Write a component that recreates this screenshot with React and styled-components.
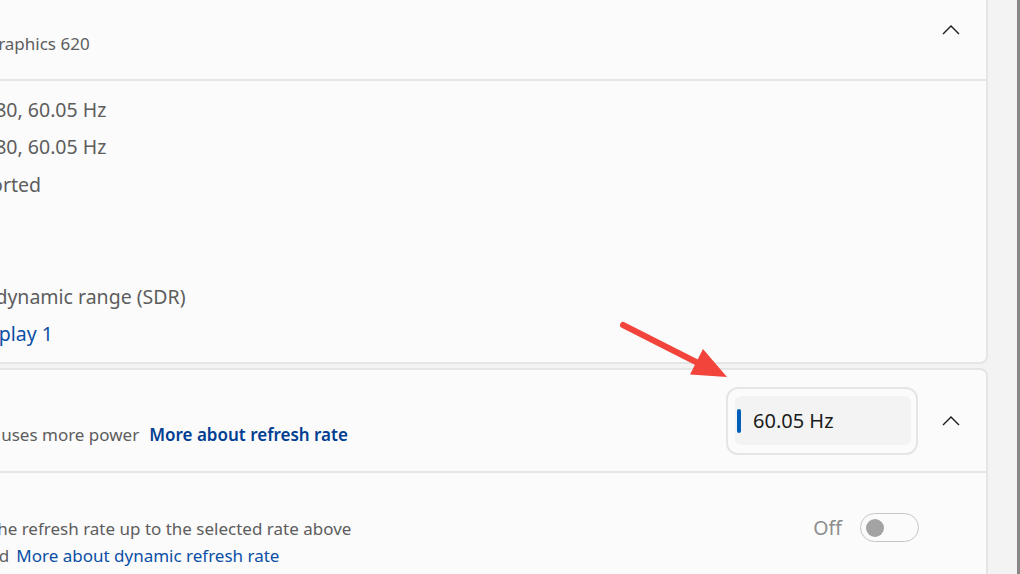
import React from 'react'
import styled, { createGlobalStyle } from 'styled-components'
import { Monitor } from 'lucide-react'

const GlobalStyle = createGlobalStyle`
  html, body {
    margin: 0;
    padding: 0;
  }
  body {
    background: #f3f3f3;
    font-family: "Noto Sans", "Open Sans", sans-serif;
    color: #1b1b1b;
    overflow: hidden;
  }
`

const Window = styled.div`
  position: relative;
  display: flex;
  align-items: flex-start;
  width: 1020px;
  height: 574px;
  overflow: hidden;
  background: #f3f3f3;
`

// the page is scrolled: the column starts left of and above the visible area
const Content = styled.main`
  flex: none;
  width: 1382px;
  margin: -22px 0 0 -394px;
  display: flex;
  flex-direction: column;
  gap: 4px;
`

const Gutter = styled.div`
  flex: none;
  width: 29px;
`

const ScrollThumb = styled.div`
  flex: none;
  align-self: stretch;
  width: 3px;
  background: #878787;
`

const Card = styled.section`
  flex: none;
  background: #fbfbfb;
  border: 2px solid #e5e5e5;
  border-radius: 8px;
  overflow: hidden;
`

const Header = styled.div`
  display: flex;
  align-items: center;
  gap: 24px;
  height: ${p => p.$height}px;
  padding: 0 15px 0 22px;
  border-bottom: 2px solid #e5e5e5;
`

const HeaderIcon = styled.div`
  flex: none;
  width: 36px;
  display: flex;
  justify-content: center;
  color: #1b1b1b;
`

const HeaderText = styled.div`
  flex: 1;
  display: flex;
  flex-direction: column;
  white-space: nowrap;
`

const Controls = styled.div`
  flex: none;
  display: flex;
  align-items: center;
  gap: 13px;
`

const Title = styled.div`
  font-size: 19.5px;
  line-height: 28px;
  color: #1b1b1b;
`

const Description = styled.div`
  font-size: 17px;
  line-height: 27px;
  color: #5d5d5d;
`

const Link = styled.a`
  color: ${p => (p.$strong ? '#003e92' : '#0a4fa6')};
  font-weight: ${p => (p.$strong ? 600 : 400)};
  margin-left: ${p => p.$gap || 0}px;
  text-decoration: none;
  cursor: pointer;
`

const ChevronButton = styled.button`
  flex: none;
  width: 40px;
  height: 40px;
  border: none;
  background: transparent;
  padding: 0;
  display: flex;
  align-items: center;
  justify-content: center;
  color: #1b1b1b;
`

const InfoGrid = styled.div`
  display: grid;
  grid-template-columns: 217px auto;
  grid-auto-rows: 37.3px;
  align-items: center;
  padding: 10px 0 10px 82px;
  font-size: 19.5px;
  color: #5d5d5d;
  white-space: nowrap;
`

const InfoLink = styled(Link)`
  grid-column: 1 / -1;
`

const Picker = styled.div`
  flex: none;
  box-sizing: border-box;
  width: 192px;
  height: 68px;
  padding: 0 5px 0 7px;
  display: flex;
  align-items: center;
  border: 2px solid #e5e5e5;
  border-radius: 12px;
  background: #fbfbfb;
`

const PickerItem = styled.div`
  flex: 1;
  height: 49px;
  display: flex;
  align-items: center;
  gap: 12px;
  padding-left: 2px;
  border-radius: 6px;
  background: #f3f3f3;
  font-size: 20px;
  color: #1b1b1b;
`

const SelectedMark = styled.span`
  width: 4px;
  height: 24px;
  border-radius: 2px;
  background: #005fb8;
`

const Section = styled.div`
  display: flex;
  align-items: center;
  padding: 13.5px 67px 13.5px 85px;
`

const ToggleGroup = styled.div`
  flex: none;
  display: flex;
  align-items: center;
  gap: 18px;
  font-size: 19.5px;
  color: #8d8d8d;
`

const Toggle = styled.div`
  box-sizing: border-box;
  width: 59px;
  height: 29px;
  border: 1.5px solid #c6c6c6;
  border-radius: 15px;
  display: flex;
  align-items: center;
  padding-left: 5px;
`

const Knob = styled.span`
  width: 18px;
  height: 18px;
  border-radius: 50%;
  background: #a3a3a3;
`

const Overlay = styled.svg`
  position: absolute;
  left: 0;
  top: 0;
  pointer-events: none;
`

const ChevronUp = () => (
  <svg width="18" height="10" viewBox="0 0 18 10" fill="none">
    <path d="M1 9 L9 1 L17 9" stroke="currentColor" strokeWidth="1.4" />
  </svg>
)

const info = [
  ['Desktop mode', '1920 × 1080, 60.05 Hz'],
  ['Active signal mode', '1920 × 1080, 60.05 Hz'],
  ['Variable refresh rate', 'Not supported'],
  ['Bit depth', '8-bit'],
  ['Color format', 'RGB'],
  ['Color space', 'Standard dynamic range (SDR)'],
]

export default function App() {
  return (
    <Window>
      <GlobalStyle />
      <Content>
        <Card>
          <Header $height={99}>
            <HeaderIcon>
              <Monitor size={30} strokeWidth={1.4} />
            </HeaderIcon>
            <HeaderText>
              <Title>Generic Monitor</Title>
              <Description>Display 1: Connected to Intel(R) UHD Graphics 620</Description>
            </HeaderText>
            <ChevronButton>
              <ChevronUp />
            </ChevronButton>
          </Header>
          <InfoGrid>
            {info.map(([label, value]) => (
              <React.Fragment key={label}>
                <span>{label}</span>
                <span>{value}</span>
              </React.Fragment>
            ))}
            <InfoLink>Display adapter properties for Display 1</InfoLink>
          </InfoGrid>
        </Card>

        <Card>
          <Header $height={101}>
            <HeaderText>
              <Title>Choose a refresh rate</Title>
              <Description>
                A higher rate gives smoother motion, but also uses more power
                <Link $strong $gap={10}>More about refresh rate</Link>
              </Description>
            </HeaderText>
            <Controls>
              <Picker>
                <PickerItem>
                  <SelectedMark />
                  60.05 Hz
                </PickerItem>
              </Picker>
              <ChevronButton>
                <ChevronUp />
              </ChevronButton>
            </Controls>
          </Header>
          <Section>
            <HeaderText>
              <Title>Dynamic refresh rate</Title>
              <Description>
                To help save power, Windows adjusts the refresh rate up to the selected rate above
              </Description>
              <Description>
                Not all apps and displays are supported
                <Link $gap={7}>More about dynamic refresh rate</Link>
              </Description>
            </HeaderText>
            <ToggleGroup>
              Off
              <Toggle>
                <Knob />
              </Toggle>
            </ToggleGroup>
          </Section>
        </Card>
      </Content>
      <Gutter />
      <ScrollThumb />

      <Overlay width="1020" height="574" viewBox="0 0 1020 574">
        <line x1="623" y1="325" x2="698" y2="363" stroke="#f2443a" strokeWidth="6" strokeLinecap="round" />
        <polygon points="727,377 690,374.5 703,349" fill="#f2443a" />
      </Overlay>
    </Window>
  )
}
